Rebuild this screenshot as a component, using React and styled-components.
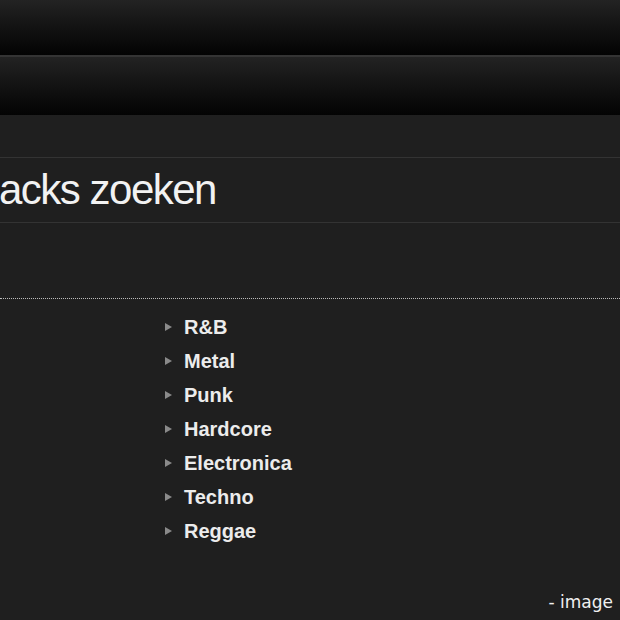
import React from 'react';
import styled, { createGlobalStyle } from 'styled-components';

const GlobalStyle = createGlobalStyle`
  html, body {
    margin: 0;
    padding: 0;
    background: #1f1f1f;
  }
`;

const Page = styled.div`
  position: relative;
  width: 620px;
  height: 620px;
  overflow: hidden;
  background: #1f1f1f;
  font-family: 'Liberation Sans', Arial, sans-serif;
`;

const Bar = styled.div`
  height: ${(p) => p.height}px;
  background: linear-gradient(to bottom, #232323 0%, #141414 45%, #030303 100%);
  border-top: ${(p) => (p.edge ? '2px solid #343434' : 'none')};
`;

const Gap = styled.div`
  height: ${(p) => p.size}px;
`;

const TitleBlock = styled.div`
  height: 64px;
  display: flex;
  align-items: center;
  border-top: 1px solid #333;
  border-bottom: 1px solid #333;
`;

const Title = styled.h1`
  margin: 0 0 0 -1px;
  font-size: 42px;
  font-weight: normal;
  color: #f2f2f2;
  letter-spacing: -1.5px;
`;

const Divider = styled.div`
  border-top: 1px dotted #bdbdbd;
`;

const GenreList = styled.ul`
  list-style: none;
  margin: 0;
  padding: 11px 0 0 165px;
`;

const GenreItem = styled.li`
  display: flex;
  align-items: center;
  height: 34px;
  font-size: 20px;
  font-weight: bold;
  color: #ececec;
`;

const Arrow = styled.span`
  width: 0;
  height: 0;
  border-top: 4px solid transparent;
  border-bottom: 4px solid transparent;
  border-left: 7px solid #8a8a8a;
  margin-right: 12px;
`;

const Caption = styled.div`
  position: absolute;
  right: 7px;
  bottom: 8px;
  font-family: 'DejaVu Sans', sans-serif;
  font-size: 17px;
  color: #f0f0f0;
`;

const genres = ['R&B', 'Metal', 'Punk', 'Hardcore', 'Electronica', 'Techno', 'Reggae'];

const App = () => (
  <Page>
    <GlobalStyle />
    <Bar height={55} />
    <Bar height={58} edge />
    <Gap size={42} />
    <TitleBlock>
      <Title>acks zoeken</Title>
    </TitleBlock>
    <Gap size={75} />
    <Divider />
    <GenreList>
      {genres.map((g) => (
        <GenreItem key={g}>
          <Arrow />
          {g}
        </GenreItem>
      ))}
    </GenreList>
    <Caption>- image</Caption>
  </Page>
);

export default App;
